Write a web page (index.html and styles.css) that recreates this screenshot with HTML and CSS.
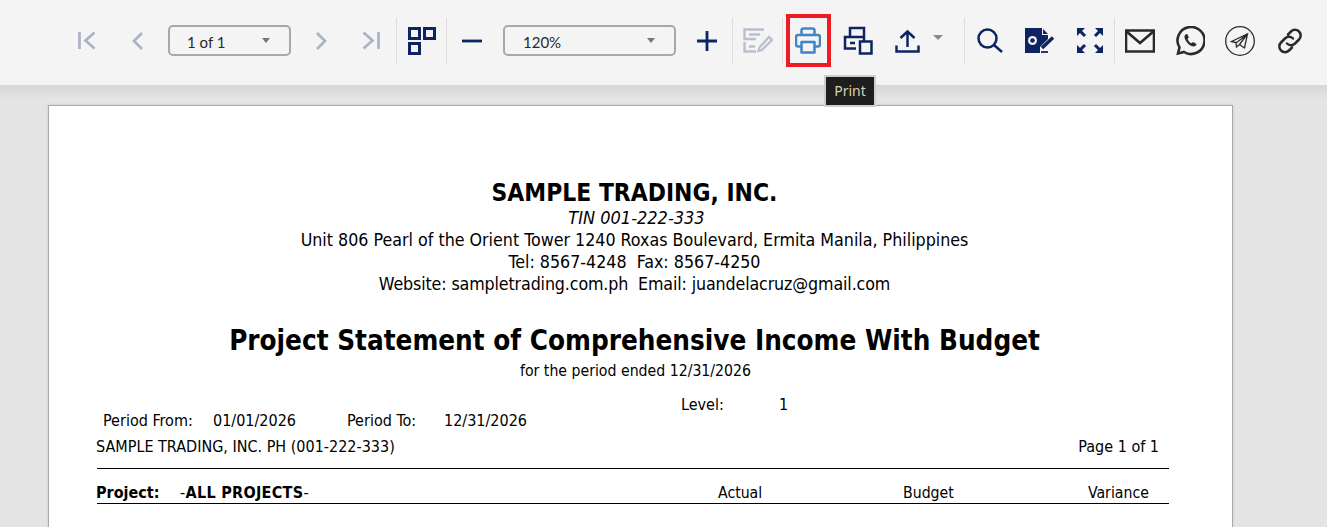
FILE: index.html
```html
<!DOCTYPE html>
<html lang="en">
<head>
<meta charset="utf-8">
<title>Report Viewer</title>
<link rel="stylesheet" href="styles.css">
</head>
<body>
<header class="toolbar">
  <button class="btn"><svg class="i-first muted" viewBox="0 0 18 19"><path d="M1.500 1v17M16.500 1.500 7.500 9.500l9 8"/></svg></button>
  <button class="btn"><svg class="i-chev muted" viewBox="0 0 11 18"><path d="M10 1 2 9l8 8"/></svg></button>
  <div class="select page-select"><span>1 of 1</span><i class="caret"></i></div>
  <button class="btn"><svg class="i-chev muted" viewBox="0 0 11 18"><path d="M1 1l8 8-8 8"/></svg></button>
  <button class="btn"><svg class="i-first muted" viewBox="0 0 18 19"><path d="M16.500 1v17M1.500 1.500l9 8-9 8"/></svg></button>
  <span class="sep"></span>
  <button class="btn btn-narrow"><svg class="i-grid navy" viewBox="0 0 28 28"><path d="M1.500 1.500h10v10h-10zM16.500 1.500h10v10h-10zM1.500 16.500h10v10h-10z"/></svg></button>
  <span class="sep"></span>
  <button class="btn"><svg class="i-pm navy" viewBox="0 0 20 20"><path d="M0 10h20"/></svg></button>
  <div class="select zoom-select"><span>120%</span><i class="caret"></i></div>
  <button class="btn"><svg class="i-pm navy" viewBox="0 0 20 20"><path d="M0 10h20M10 0v20"/></svg></button>
  <span class="sep"></span>
  <button class="btn btn-narrow"><svg class="i-edit pale" viewBox="0 0 30 25"><path d="M21 1.500H1.500V11H13M1.500 14v9.500H13M6 6.500h11M6 18.500h6M16.500 19.500 26 9l3 3-10 10-3.500.8z"/></svg></button>
  <span class="sep"></span>
  <button class="btn print-btn"><svg class="i-print blue" viewBox="0 0 26 27"><path d="M6.500 8V3.500a2 2 0 0 1 2-2h9a2 2 0 0 1 2 2V8M6 19.500H3a2 2 0 0 1-2-2V10a2 2 0 0 1 2-2h20a2 2 0 0 1 2 2v7.500a2 2 0 0 1-2 2h-3M6.500 15h13v10.500h-13z"/></svg></button>
  <button class="btn"><svg class="i-print2 navy" viewBox="0 0 30 29"><path d="M7 11V2h14v9M13 22.500H2V11h19v4M7 17h5M17 15.500h11.500v12H17z"/></svg></button>
  <button class="btn share-btn"><svg class="i-up navy" viewBox="0 0 25 24"><path d="M12.500 18V2.500M5.500 9l7-6.500 7 6.500M1.500 16.500v6h22v-6"/></svg></button>
  <i class="caret share-caret"></i>
  <span class="sep"></span>
  <button class="btn"><svg class="i-search navy" viewBox="0 0 26 25"><circle cx="10.500" cy="10.500" r="9"/><path d="M17 17l8 7"/></svg></button>
  <button class="btn"><svg class="i-doc" viewBox="0 0 30 25"><path class="solid" d="M0 0h17v7h6v4l-8 8v6H0z"/><path class="solid" d="M18 1l5 5h-5z"/><circle cx="7.500" cy="12.500" r="4.500" fill="#f4f4f4"/><circle cx="7.500" cy="12.500" r="2.300" class="solid"/><path class="pen" d="M17 20 28 9.500"/><path class="pen2" d="M16 24h7"/></svg></button>
  <button class="btn btn-narrow"><svg class="i-expand" viewBox="0 0 26 25"><path class="solid" d="M0 0h8L0 8zM26 0v8l-8-8zM0 25v-8l8 8zM26 25h-8l8-8z"/><path class="expand-stem" d="M2 2l6 6M24 2l-6 6M2 23l6-6M24 23l-6-6"/></svg></button>
  <span class="sep"></span>
  <button class="btn"><svg class="i-dark" viewBox="0 0 30 30"><path d="M1 4.500h28v21H1zM1 5l14 12L29 5"/></svg></button>
  <button class="btn"><svg class="i-dark" viewBox="0 0 30 30"><path d="M3 27.500l1.500-6A13.500 13.500 0 1 1 9 26z"/><path class="phone" d="M10.500 8.500c-1.500 1-1.500 3.500.5 6.500s5 5.500 7.500 5.500c1.500 0 3-1 3-2.500l-3.500-2-1.500 1.300c-1.500-.5-3.300-2.500-4-4.300l1.300-1.500-1.500-3.500z"/></svg></button>
  <button class="btn"><svg class="i-dark tg" viewBox="0 0 30 30"><circle cx="15" cy="15" r="14.300"/><path d="M6.500 15.500 22.500 8l-3 14-5-3.500-3 2.500-.5-4.500zM11 17l11-8.500-7.500 10"/></svg></button>
  <button class="btn"><svg class="i-link" viewBox="0 0 26 26"><path d="M11 6.500l3-3a5.600 5.600 0 0 1 8 8l-4 4a5.600 5.600 0 0 1-8 0M15 19.500l-3 3a5.600 5.600 0 0 1-8-8l4-4a5.600 5.600 0 0 1 8 0"/></svg></button>
</header>
<div class="tooltip">Print</div>
<main class="viewer">
  <article class="sheet">
    <h1 class="company">SAMPLE TRADING, INC.</h1>
    <p class="tin">TIN 001-222-333</p>
    <p class="line">Unit 806 Pearl of the Orient Tower 1240 Roxas Boulevard, Ermita Manila, Philippines</p>
    <p class="line">Tel: 8567-4248&nbsp; Fax: 8567-4250</p>
    <p class="line line-tight">Website: sampletrading.com.ph&nbsp; Email: juandelacruz@gmail.com</p>
    <h2 class="report-title">Project Statement of Comprehensive Income With Budget</h2>
    <p class="period-line">for the period ended 12/31/2026</p>
    <div class="level-row"><span>Level:</span><span>1</span></div>
    <div class="period-row"><span>Period From:</span><span>01/01/2026</span><span>Period To:</span><span>12/31/2026</span></div>
    <div class="entity-row"><span>SAMPLE TRADING, INC. PH (001-222-333)</span><span>Page 1 of 1</span></div>
    <div class="head-row"><b>Project:</b><b class="all"><span class="dash">-</span>ALL PROJECTS<span class="dash">-</span></b><span class="col">Actual</span><span class="col">Budget</span><span>Variance</span></div>
  </article>
</main>
</body>
</html>
```
FILE: styles.css
```css
* { box-sizing: border-box; }
html, body { margin: 0; height: 100%; overflow: hidden; }
body { background: #e4e4e4; position: relative; font-family: "DejaVu Sans Condensed", "DejaVu Sans", sans-serif; color: #000; }
p, h1, h2 { margin: 0; }

.toolbar { height: 85px; background: #f4f4f4; display: flex; align-items: center; padding: 0 0 4px 62px; position: relative; }
.btn { width: 50px; height: 50px; flex: none; border: 0; padding: 0; background: none; display: flex; align-items: center; justify-content: center; }
.btn-narrow { width: 49px; }
.sep { width: 1px; height: 45px; background: #dcdcdc; flex: none; }

svg { fill: none; stroke-linecap: butt; stroke-linejoin: miter; display: block; stroke-width: 2.500; }
.muted { stroke: #a9b2c6; }
.pale { stroke: #b9bfcd; }
.navy { stroke: #0c2461; }
.blue { stroke: #3f86c6; }
.i-first { width: 18px; height: 19px; stroke-width: 2.700; }
.i-chev { width: 11px; height: 18px; stroke-width: 2.700; }
.i-grid { width: 28px; height: 28px; stroke-width: 3; }
.i-pm { width: 20px; height: 20px; stroke-width: 2.800; }
.i-edit { width: 30px; height: 25px; stroke-width: 2.400; }
.i-print { width: 26px; height: 27px; stroke-linejoin: round; margin-left: -1px; }
.i-print2 { width: 30px; height: 29px; }
.i-up { width: 25px; height: 24px; }
.i-search { width: 26px; height: 25px; }
.i-doc { width: 30px; height: 25px; }
.i-expand { width: 26px; height: 25px; }
.i-dark { width: 30px; height: 30px; stroke: #2a2a2a; stroke-width: 2.600; }
.i-link { width: 26px; height: 26px; stroke: #2a2a2a; stroke-width: 2.500; stroke-linecap: round; }
.solid { fill: #0c2461; stroke: none; }
.pen { stroke: #0c2461; stroke-width: 3.500; }
.pen2 { stroke: #0c2461; stroke-width: 1.800; }
.expand-stem { stroke: #0c2461; stroke-width: 3; }
.phone { fill: #2a2a2a; stroke: none; }
.tg { stroke-width: 1.300; }

.select { height: 31px; margin: 0 6px; border: 2px solid #a8a8a8; border-radius: 5px; display: flex; align-items: center; justify-content: space-between; font: 15px "Lato", sans-serif; color: #2a2a2a; flex: none; background: #f4f4f4; }
.page-select { width: 123px; padding: 2px 19px 0 17px; margin-right: 5px; }
.zoom-select { width: 173px; padding: 2px 19px 0 18px; }
.caret { display: block; width: 0; height: 0; border: 4px solid transparent; border-top: 5px solid #777; border-bottom: 0; margin-top: -2px; }
.share-caret { flex: none; border-width: 5px 5px 0; border-top-color: #888; margin: -7px 21px 0 1px; }

.print-btn { width: 45px; height: 53px; margin: -1px 2px 0 3px; border: 4px solid #ed1c24; }
.share-btn { margin-left: -1px; }

.tooltip { position: absolute; left: 824px; top: 75px; width: 52px; height: 32px; background: #1e1e1e; border: 2px solid #cfcfcf; color: #d9d2b0; font: 14px/28px "Noto Sans", sans-serif; text-align: center; z-index: 3; }

.viewer { height: calc(100% - 85px); padding: 20px 94px 0 48px; background: linear-gradient(#d6d6d6, #e4e4e4 14px); }
.sheet { background: #fff; border: 1px solid #a8a8a8; height: 500px; padding: 73px 63px 0 47px; box-shadow: 0 0 3px rgba(0,0,0,.1); font-size: 16px; line-height: 22px; text-align: center; }
.company { font-size: 24.400px; line-height: 28px; font-weight: 700; margin-left: 4px; }
.tin { font-style: italic; font-size: 18px; line-height: 22px; margin-left: 8px; }
.line { font-size: 17.700px; line-height: 22px; margin-left: 4px; }
.line-tight { letter-spacing: -.13px; }
.report-title { font-size: 27.600px; line-height: 34px; font-weight: 700; margin: 29px 0 0 4px; }
.period-line { font-size: 15.700px; line-height: 20px; margin: 3px 0 0 6px; }
.level-row { display: flex; margin: 14px 0 0 585px; line-height: 20px; }
.level-row span:first-child { width: 98px; text-align: left; }
.period-row { display: flex; margin: -4px 0 0 7px; line-height: 20px; text-align: left; }
.period-row span:nth-child(1) { width: 110px; }
.period-row span:nth-child(2) { width: 134px; }
.period-row span:nth-child(3) { width: 97px; }
.entity-row { display: flex; justify-content: space-between; padding-right: 10px; margin-top: 6px; line-height: 20px; }
.head-row { display: flex; text-align: left; border-top: 1px solid #000; border-bottom: 1px solid #000; margin: 11px 0 0 1px; height: 36px; line-height: 22px; padding-top: 13px; font-size: 15.700px; }
.head-row b:first-child { width: 84px; margin-left: -1px; font-size: 16px; }
.all { width: 538px; font-size: 16px; letter-spacing: .3px; }
.dash { font-weight: 400; }
.col { width: 185px; }
```
